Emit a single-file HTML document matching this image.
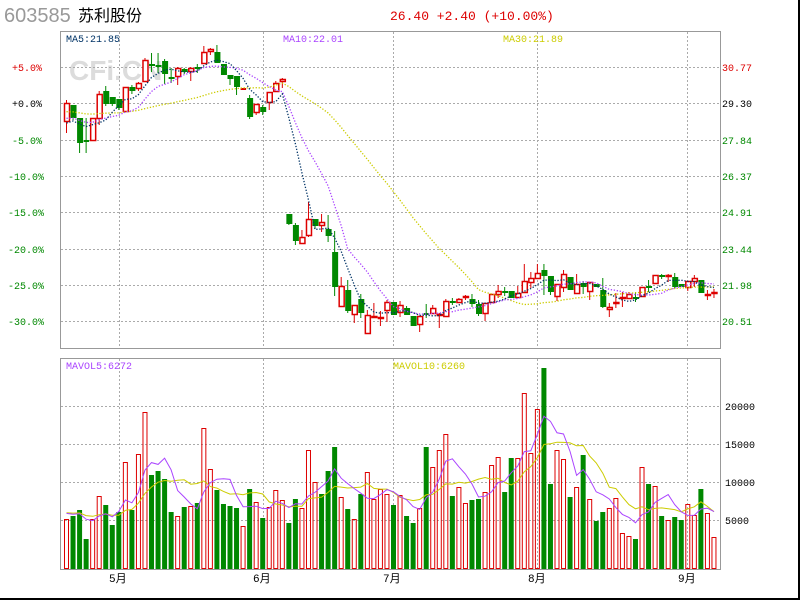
<!DOCTYPE html>
<html><head><meta charset="utf-8">
<style>
html,body{margin:0;padding:0;background:#fff;}
#w{position:relative;width:800px;height:600px;overflow:hidden;background:#fff;}
svg{position:absolute;left:0;top:0;}
text{font-family:"Liberation Mono",monospace;font-size:10px;}
</style></head><body><div id="w">
<svg id="s" width="800" height="600" xmlns="http://www.w3.org/2000/svg">
<rect x="0" y="0" width="799" height="599" fill="#fff"/>
<line x1="799" y1="0" x2="799" y2="600" stroke="#000" stroke-width="2"/>
<line x1="0" y1="599" x2="800" y2="599" stroke="#000" stroke-width="2"/>
<text x="4" y="22" style="font-family:'Liberation Sans',sans-serif;font-size:20px" fill="#999">603585</text>
<text x="78" y="21" style="font-family:'Liberation Sans','Noto Sans CJK SC',sans-serif;font-size:16px" fill="#000">苏利股份</text>
<text x="390" y="20" style="font-size:13px" fill="#d00">26.40 +2.40 (+10.00%)</text>
<text x="69" y="80" style="font-family:'Liberation Sans',sans-serif;font-size:28px;font-weight:bold" fill="#dcdcdc">CFi.CN</text>
<g id="grid" stroke="#aaa" stroke-dasharray="2,2" stroke-width="1"></g>
<rect x="60.5" y="31.5" width="660" height="317" fill="none" stroke="#999"/>
<rect x="60.5" y="358.5" width="660" height="211" fill="none" stroke="#999"/>
<text x="66" y="42" fill="#036">MA5:21.85</text>
<text x="283" y="42" fill="#a4f">MA10:22.01</text>
<text x="503" y="42" fill="#cc0">MA30:21.89</text>
<text x="66" y="369" fill="#a4f">MAVOL5:6272</text>
<text x="393" y="369" fill="#cc0">MAVOL10:6260</text>
<g id="lab"></g>
<g id="vol"></g><g id="vma"></g>
<g id="can"></g><g id="ma"></g>
</svg></div>
<script>
var NS="http://www.w3.org/2000/svg";
function el(p,t,a,tx){var e=document.createElementNS(NS,t);for(var k in a)e.setAttribute(k,a[k]);if(tx)e.textContent=tx;document.getElementById(p).appendChild(e);return e;}
[67,103,140,176,212,249,285,321,406,444,482,520].forEach(function(y){el('grid','line',{x1:61,x2:720,y1:y+.5,y2:y+.5});});
[119,263,393,537,687].forEach(function(x){el('grid','line',{x1:x+.5,x2:x+.5,y1:32,y2:348});el('grid','line',{x1:x+.5,x2:x+.5,y1:359,y2:569});});
var L=[["+5.0%",67,"#d00"],["+0.0%",103,"#000"],["-5.0%",140,"#080"],["-10.0%",176,"#080"],["-15.0%",212,"#080"],["-20.0%",249,"#080"],["-25.0%",285,"#080"],["-30.0%",321,"#080"]];
L.forEach(function(a){el('lab','text',{x:a[0].length>5?8:12,y:a[1]+4,fill:a[2]},a[0]);});
var R=[["30.77",67,"#d00"],["29.30",103,"#000"],["27.84",140,"#080"],["26.37",176,"#080"],["24.91",212,"#080"],["23.44",249,"#080"],["21.98",285,"#080"],["20.51",321,"#080"]];
R.forEach(function(a){el('lab','text',{x:722,y:a[1]+4,fill:a[2]},a[0]);});
[["20000",406],["15000",444],["10000",482],["5000",520]].forEach(function(a){el('lab','text',{x:725,y:a[1]+4,fill:"#000"},a[0]);});
[["5月",118],["6月",262],["7月",392],["8月",537],["9月",687]].forEach(function(a){el('lab','text',{x:a[1]-9,y:582,fill:"#000",style:"font-family:'Liberation Mono','Noto Sans CJK SC',monospace;font-size:11px"},a[0]);});
var V="r519 g516 g510 g539 r519 r496 g505 g525 g512 r462 g510 r454 r412 g475 g471 g479 g512 r516 g507 r506 g503 r428 r469 g490 g504 g506 g508 r526 g489 r502 g518 r507 r490 r500 g523 g499 r508 r450 r482 g494 g471 g447 r497 g509 r519 g494 r472 r499 r489 r494 g505 r495 g516 g523 r508 g447 r467 r450 r434 g496 r487 r503 g500 g499 r492 r465 r457 g492 g458 r458 r393 r453 r409 g368 g484 r450 r459 g497 r487 g455 r499 g521 g512 r508 r498 r533 r536 g539 r467 g484 r486 g516 r520 g517 g520 r504 r515 g489 r513 r537".split(" ");
function X(i){return 64+6.54*i;}
var vt=[];
V.forEach(function(s,i){var t=+s.slice(1);vt.push(t);var x=X(i);
if(s[0]=='r')el('vol','rect',{x:x+.5,y:t+.5,width:4,height:569-t-1,fill:"none",stroke:"#d00"});
else el('vol','rect',{x:x,y:t,width:5,height:569-t,fill:"#080"});});
function vma(n,c){var pts=[];for(var i=0;i<vt.length;i++){var s=0,k=0;for(var j=Math.max(0,i-n+1);j<=i;j++){s+=vt[j];k++;}var pad=n-k;s+=pad*512;pts.push((X(i)+2.5).toFixed(1)+","+(s/n).toFixed(1));}
el('vma','polyline',{points:pts.join(" "),fill:"none",stroke:c,"stroke-width":1});}
vma(10,"#cc0");vma(5,"#a4f");
var C=[
"r103,122,100,133","g105,118,105,120","g118,143,118,153","g140,141,118,153","r118,141,118,141","r94,119,91,125","g91,104,86,106","g97,104,97,106","g99,108,99,110","r87,112,87,112",
"g87,91,85,94","r83,89,82,91","r60,82,58,82","g64,66,53,72","g65,67,53,73","g61,74,59,84","g77,79,68,83","r68,77,67,85","g69,72,68,74","r68,72,67,81",
"g67,69,64,73","r52,64,46,64","r49,52,48,55","g52,63,45,63","g64,75,64,75","g75,79,75,85","g76,87,76,95","r88,89,88,89","g98,117,95,119","r104,113,104,115",
"g107,112,105,115","r92,103,92,110","r83,92,81,92","r79,82,78,88","g214,224,214,225","g225,241,223,245","r237,244,230,244","r219,236,202,237","g219,226,219,229","r222,226,214,232",
"g229,236,215,242","g252,287,231,296","r286,307,277,307","g290,311,280,313","r305,315,305,323","g299,313,294,318","r315,334,310,334","r316,318,303,318","r317,319,311,326","r302,311,300,322",
"g302,315,302,315","r305,313,301,317","g308,315,306,315","g316,326,316,326","r316,325,316,332","g313,314,304,318","r308,314,305,314","r314,316,313,328","r301,317,299,317","g301,303,298,305",
"r299,303,298,303","r296,298,295,300","g299,304,294,307","g304,314,300,316","r303,314,303,321","r294,303,294,303","r291,295,285,298","g291,293,287,296","g291,298,291,298","r293,298,286,298",
"r281,293,264,293","r278,283,272,288","r273,279,264,279","g270,276,264,295","g276,292,276,295","r284,297,284,301","r274,288,270,292","g277,290,277,290","r284,294,274,294","g283,287,281,294",
"r282,292,282,300","g284,287,284,287","g290,307,278,308","r307,310,303,317","r302,304,293,308","r297,299,292,307","r294,299,292,299","g297,299,292,302","r287,297,287,297","g286,288,280,292",
"r275,284,275,284","g275,277,274,279","r275,277,274,282","g277,287,273,288","g284,287,284,287","r281,288,281,291","r278,282,275,287","g280,293,280,293","r294,296,290,300","r292,294,289,298"];
var cl=[];
C.forEach(function(s,i){var t=s[0],a=s.slice(1).split(",").map(Number);var x=X(i),cx=x+2.5;
cl.push(t=='r'?a[0]:a[1]);
var col=t=='r'?"#d00":"#080";
el('can','line',{x1:cx,x2:cx,y1:a[2],y2:a[3],stroke:col,"stroke-width":1});
var h=a[1]-a[0];
if(h<2){el('can','rect',{x:x,y:a[0],width:5.5,height:2,fill:col});}
else if(t=='r')el('can','rect',{x:x+.5,y:a[0]+.5,width:5,height:h-1,fill:"#fff",stroke:col,"stroke-width":1.5});
else el('can','rect',{x:x,y:a[0],width:6,height:h,fill:col});});
function pma(n,c,pad){var pts=[];for(var i=0;i<cl.length;i++){var s=0,k=0;for(var j=Math.max(0,i-n+1);j<=i;j++){s+=cl[j];k++;}s+=(n-k)*pad;pts.push((X(i)+2.5).toFixed(1)+","+(s/n).toFixed(1));}
el('ma','polyline',{points:pts.join(" "),fill:"none",stroke:c,"stroke-width":1.3,"stroke-dasharray":"1.3,1.7"});}
pma(30,"#cc0",112);pma(10,"#a4f",120);pma(5,"#036",128);
</script>
</body></html>
